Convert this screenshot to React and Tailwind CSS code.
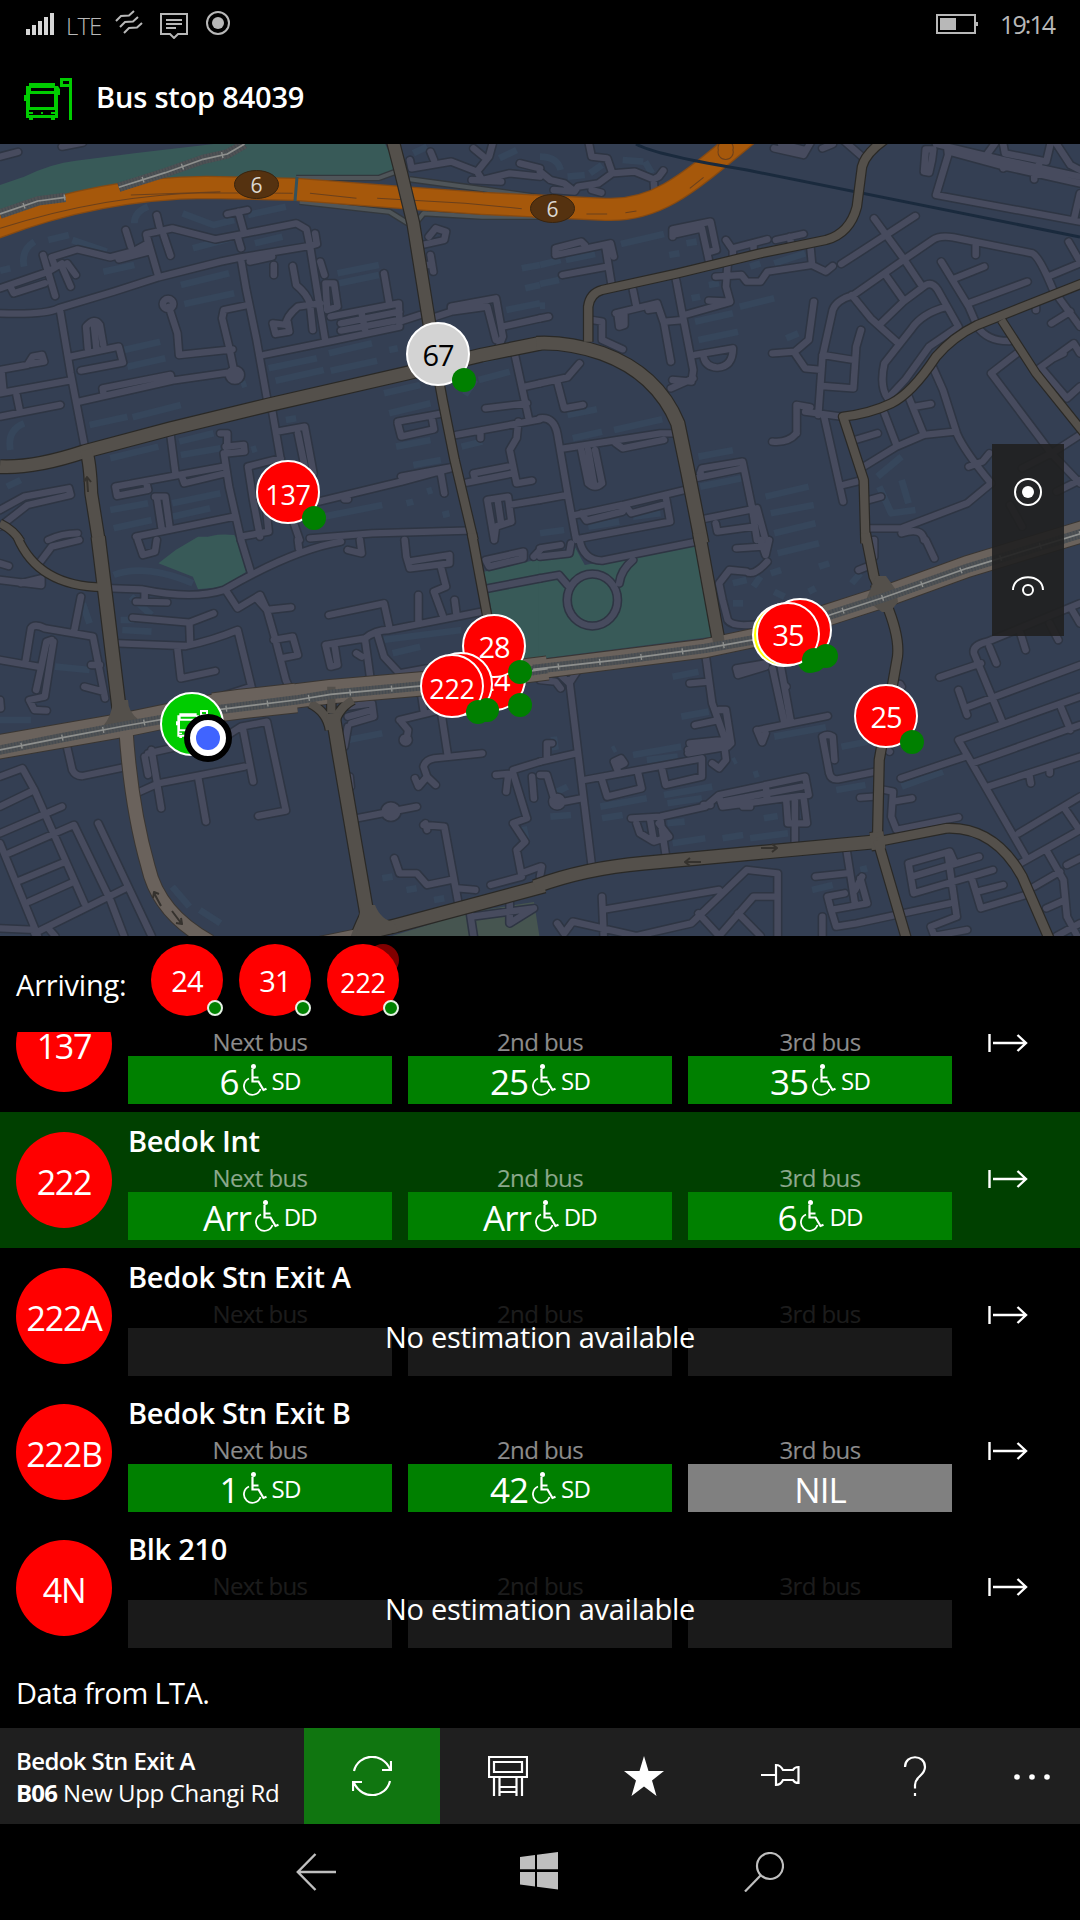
import clsx from "clsx";

// The map is cut in four tiles, every tile is 1568 x 1200 units
const tiles = [
  {
    id: "nw",
    transform: "translate(0 140) scale(0.3444 0.3333)",
    parks:
      "M0 135L70 110Q150 70 220 62L390 40L620 12L1118 12L1160 100L1110 115L640 130Q300 140 0 260ZM580 1200Q620 1178 680 1185L690 1200Z",
    buildings:
      "M70 380Q60 330 100 305M140 300L200 285M210 300L310 335M0 392L30 385M390 250Q390 215 430 200M530 220L620 255L680 240M720 225L830 200M560 325L670 295M740 310L820 290M300 395L390 375M525 435L665 400M535 492L680 460M360 630L465 605M370 680L480 655M780 685L920 655M955 640L1080 610M800 722L940 690M960 692L1095 662M260 855L370 830M385 832L525 795M30 930Q20 870 70 850M980 400L1100 375M985 430L1100 405M1115 760L1220 735M1130 820L1250 790M1150 920L1250 900M320 955L460 920M330 1040L380 1025M520 905L620 880M525 945L640 925M320 1110L430 1090M330 1165L440 1140M500 1090L640 1060M500 1130L610 1105M940 1130L1110 1095M1200 975L1280 960M1350 765L1380 720M1390 720L1480 695M1400 660L1440 650M1340 920L1400 905M1515 385L1568 375M1525 445L1568 435M1470 510L1568 490M1200 40L1240 20M1450 55L1500 30M20 1040L60 1020M830 840L860 835M1180 1090L1200 1085M1285 1125L1305 1120M1240 1055L1255 1050M1130 630L1155 625M730 930L745 925M700 735L715 730",
    minor:
      "M0 520Q130 525 170 505L330 455L460 412L640 365L700 352L900 318M900 318L890 268L860 250L705 282L625 298L500 265L425 282L430 310L345 358L430 335M0 445L140 395L180 370M30 440L40 460L130 430M125 345L160 468M195 370L220 405M180 380L205 440M150 352L225 328L320 352L420 325M150 352L158 375M365 270L380 320M425 285L460 410M455 225L463 260M475 285L495 347M660 222L718 210M692 215L708 275M690 290L700 325M900 318L920 312L915 280M725 365L790 350M795 375L795 405M900 318L925 480L945 605M930 365L942 405M850 378L860 435Q890 460 900 490L908 570M930 490L865 500Q830 530 830 555L792 550L800 582L840 575L835 545M765 645L955 605L1160 560L1158 490L960 530M945 430L970 430L980 500L950 510ZM1115 400L1130 490M990 550L1160 515M990 572L1160 540M1050 520L1060 570M1160 545L1220 525M700 360L715 450L745 600L775 775M790 810L815 960M720 495L650 510L645 535L665 620L682 705M675 628L520 645L515 580L490 500M682 695L500 722L230 785M300 758L298 745L495 705L498 720M175 515L205 700L245 915M205 650L345 620L357 668L235 692M255 625L250 560Q275 530 290 555L300 615M272 550L280 625M0 690L80 675L95 650L122 645L128 665L90 672M0 760L200 722M5 700L10 755M48 765L58 815M0 830L175 795M495 885L510 1005M335 1040L650 980M335 1040L340 1068L430 1050L425 1030M530 1015L535 1030L655 1000M640 880L660 880L660 940L710 935L708 915L655 920M650 940L665 1040L700 1200M805 875L885 860L910 1000M865 880L885 980M815 955L720 980L735 1080L755 1190M770 1080L780 1175L700 1190M925 1085L1165 1025L1320 982M1165 1010L1320 980M1280 1000L1290 1060M850 1140L870 1200M0 1110L70 1070L200 1045L205 1065L80 1095L0 1160M140 1200Q180 1180 225 1180M395 1190L680 1130M450 1070L480 1070L492 1160M455 1070L470 1170M1155 845L1285 820M1155 850L1165 890L1260 868L1255 840M1325 885L1568 838M1410 805L1530 790M1495 645L1535 835M1525 740L1568 730M1265 530L1310 515L1310 500L1440 475L1460 590L1450 615M1310 515L1415 500L1440 600M1460 560L1568 535M1505 845L1500 895L1480 930L1500 1030L1545 1022M1380 1020L1375 1000L1475 980M1355 1028L1490 1000M1395 880L1395 895M1415 1080L1475 1070L1485 1145L1440 1160L1435 1200M1415 1080L1435 1200M1445 1080L1455 1150M1480 1095L1568 1080M1190 60L1195 85L1310 65L1385 95L1420 50L1430 12M1385 95L1400 120L1480 100L1568 110M1250 35L1260 60M1370 120L1455 125M1510 70L1568 85M1375 25L1410 55M1225 315L1290 300L1295 275L1265 265L1245 290M1250 345L1258 395M1235 375L1255 375M900 1195L1080 1180L1355 1172M0 50L52 36M180 20L240 8M665 705A17 17 0 1 0 699 705A17 17 0 1 0 665 705M473 492A15 15 0 1 0 503 492A15 15 0 1 0 473 492M1000 1078L1010 1078",
    major: [
      [38, "M0 980Q100 985 245 935L500 865L780 795L1180 700L1400 645L1568 610"],
      [34, "M1140 0L1165 100L1200 250L1245 540L1260 640"],
      [24, "M1260 640L1285 780L1320 960L1375 1200"],
      [34, "M250 930Q262 970 265 1060L288 1210"],
      [22, "M0 1150Q40 1170 60 1205"],
    ],
    brown: [],
    highway: "M-20 266Q280 145 600 142L860 148L1200 175L1400 190L1590 200",
    ramps: "M860 114L1100 114L1150 95M1190 118L1350 140L1568 172M870 185L1130 215L1185 250M1210 245L1230 220L1400 230L1568 230",
    rail: "M0 222L110 183L190 172M345 142L480 98L590 58L660 42L710 12",
    lines: "M0 265Q300 165 600 158L850 160M900 160L1035 175M1095 175L1350 190L1515 206M380 165L640 155",
  },
  {
    id: "ne",
    transform: "translate(540 140) scale(0.3444 0.3333)",
    parks: "",
    buildings:
      "M0 50Q50 50 60 90M80 110L130 105M145 100L180 75M240 60L300 65M305 65L325 100M235 312L360 282M0 375L60 360M75 360L160 342M375 345L405 340M425 310L455 305M680 370L770 340M0 432L55 420M440 475L465 470M490 435L520 430M580 500L680 475M450 545L560 520M460 600L575 575M0 497L15 497M95 895L180 875M215 870L355 838M80 825L165 808M460 950L560 931M465 1040L585 1015M655 1070L780 1040M670 1120L795 1095M680 1180L800 1150M270 1130L350 1120M140 1160L230 1145M715 595L750 580M980 1010L1050 950M985 1040L1020 1120L1090 1110M1050 1020L1070 1090M610 380L640 370M0 1180L70 1170",
    minor:
      "M140 0L150 50L195 55L210 100L275 95L330 118L345 110L358 92M330 118L332 148M210 100L170 130L110 140L100 155L40 150M0 95L30 120L70 130L95 150M150 150L178 158M680 25L765 45L790 0M820 25L850 12M880 0L935 50M700 12L770 30M1120 28L1142 28L1138 60L1130 98L1115 95ZM1180 0L1185 45L1150 165L1568 245M1150 12L1345 60L1568 110M1190 35L1350 80L1568 130M1320 12L1300 40M1345 12L1350 40L1470 65L1485 0M1500 12L1540 75L1568 90M1340 60L1345 85M1435 100L1435 118M1568 160L1550 240M1450 65L1445 95M385 290L385 268L495 245L512 330L495 335M385 285L470 265L490 360M45 340L45 325L120 305L130 315M45 345L205 310L214 350M190 320L208 435M65 405L195 380M540 300L560 330L560 345M560 325L660 298M685 300L765 282M725 290L728 305M620 310L620 325M785 320L790 375L830 395L850 378M790 375L660 395L640 425L600 425L585 405L510 410M545 370L540 440L552 485L490 482M550 487L420 525M395 420L415 530L445 690L440 725L385 720M445 715L380 745M270 450L280 500M220 520L340 490L360 550L380 665M225 520L230 560L245 555L245 515M315 510L345 505M365 545L415 540M150 540L180 545L180 600L240 628M450 645L560 625Q560 680 515 683Q480 680 475 650M0 535L25 530M0 730L80 712L115 670M50 725L70 805L125 795M0 835Q40 830 50 880L80 1060L105 1200M70 925L350 880L385 880M220 910L240 925L360 900M120 930L140 1030Q160 1050 180 1030L160 930M140 930L158 1040M0 1080L80 1065M105 1125L240 1095L420 1050M120 1120L135 1142L240 1115L245 1100M250 1100L265 1120L355 1095M365 1070L378 1145L105 1198M450 1015L590 985M465 1000L470 985L588 965L615 1100L630 1200M470 1138L630 1105L655 1200M510 1150L515 1175L620 1160M795 485L780 600L740 635L675 640M740 640L770 685L815 690M745 880Q720 910 675 905M745 880L745 795L785 802M770 815L875 830M808 825L820 650L850 510Q860 480 910 465L1055 360L1140 300Q1160 285 1200 292L1430 340Q1450 350 1490 450L1568 560M820 645L910 660M820 738L910 745L918 620L932 570M905 465L960 535L1035 605M970 235L1055 355L1110 440M875 372L1090 228M1000 400L1055 480M985 555L1055 485L1120 435Q1140 425 1155 450L1215 560L1130 620L1060 720L1010 775M1180 500Q1110 520 1080 565L1000 670Q985 740 1010 775M1165 365L1245 500L1270 560Q1300 605 1365 603M1205 415L1290 380M1245 490L1415 425M1265 315L1265 345M1475 410L1568 370M1535 305L1568 365M1485 550L1540 515M1440 500L1440 510M1385 640L1310 700L1485 940L1568 1030M1485 940L1568 885M1400 985L1485 940M1140 680L1170 750L1210 880Q1230 930 1310 1030L1240 1090L1050 1165L955 1165M1035 920L1115 885L1205 875M1070 770L1115 885M1035 920L940 980M1000 820L1035 915M915 900L980 880M1090 800L1135 792M1245 980L1285 965L1305 940M825 830L880 1085M880 1035L930 1022M955 1080L990 1070M1450 685L1550 610L1568 640M1460 690L1530 775L1568 740M1490 655L1520 640M1500 1055L1568 1020M1050 1180Q1110 1160 1115 1200M1365 1095L1400 1160",
    major: [
      [38, "M-10 610Q80 605 180 640Q340 700 400 850L430 1000L470 1210"],
      [24, "M140 605L140 500Q145 460 180 450L400 400L640 340L830 300Q900 280 920 200L935 80Q945 40 1000 0"],
      [24, "M1580 428L1270 555Q1200 590 1150 650Q1080 760 1020 790Q960 820 880 830L940 1020L945 1210"],
      [22, "M1340 540L1440 700L1580 880"],
    ],
    brown: [],
    highway: "M-20 198L190 208C340 215 430 130 600 -15",
    ramps: "",
    rail: "",
    lines: "M135 222L195 222M248 218L280 213M435 145L475 112M518 30A22 22 0 1 0 560 30A22 22 0 1 0 518 30",
  },
  {
    id: "sw",
    transform: "translate(0 540) scale(0.3444 0.3333)",
    parks: "M460 70L510 30L575 -10L685 -10L715 95L650 140L575 148L560 110ZM1405 95L1575 55L1575 360L1450 370L1418 150Z",
    buildings:
      "M330 105Q420 70 560 130M350 240L390 240M355 270L440 275M160 380L260 390M380 170L440 225M0 540L90 540M1110 300L1340 270M1140 340L1220 320M1010 600L1110 580M500 1040L550 1100M580 1110L640 1150M1110 1015L1140 1010M1180 1050L1210 1045M1260 1080L1290 1075M1430 100L1530 75M240 190L260 250M1520 860L1530 910",
    minor:
      "M0 120L120 135L120 115L60 130M0 70L25 78M110 75L150 20L230 0M400 0L415 45L450 35L455 0M325 145L410 148Q560 180 650 150Q850 30 990 5M420 160L420 185M395 185L485 187M865 0L868 25M700 0L728 95M385 233L550 248L620 220M550 250L552 310M345 310L540 318Q620 300 690 270L730 440L640 470M515 325L525 415L625 393M655 150L690 205L755 165L775 210L845 202M745 175L775 210L800 300L830 420L860 490M795 300L850 290L865 345L815 355M235 170L215 275M75 360L90 265Q100 250 130 265L270 290L305 475M0 360L110 380M150 300L135 305L120 380L105 450M155 305L145 370L130 470L85 480L100 510L135 512M265 375L290 375M245 440L300 455M955 225L1115 190L1130 260M945 315L1060 295Q1090 270 1130 270L1400 215M1215 165L1215 245M1320 180L1325 220M945 315L960 380L980 375L972 320M1060 300L1080 450M1035 340L1050 350M1095 280L1115 350L1160 400L1240 385M1175 0L1180 50L1190 85L1305 70L1305 45L1185 65M1280 80L1295 140L1260 155L1285 225M1045 0L1050 40L1010 30M1410 60L1520 35L1520 55L1420 80ZM1418 145L1568 115M1568 30L1550 50M190 600L210 690Q220 710 240 708L370 680M400 758L460 730L710 680M430 640L540 615M440 630L468 805M420 650L430 705M575 710L598 845M705 565L735 725M640 600L700 560L775 545L830 812L750 828M0 710L65 685L100 750L245 1090M0 800L90 755M0 880L180 800M15 945L215 855L320 1080L360 1188M0 910L110 1188M50 1025L190 965M85 1085L215 1025M100 1180L365 1045M285 850L440 1188M140 1165L160 1188M0 1165L100 1170M1010 500L1080 490L1085 530L1020 550M1010 530L1080 510M1010 560L1000 620M1160 540L1280 510L1300 645M1165 545L1185 570L1180 605M1240 710L1230 680Q1235 660 1260 655L1400 640M1205 715L1215 740L1240 710L1265 735M1220 440L1230 510M1035 835L1210 800M1015 710L1018 740M1230 855L1290 860L1330 1085M1240 870L1235 850M1145 955L1160 1000L1210 1000L1240 1035L1310 1020M1330 1045L1380 1050M1440 705L1490 700L1530 835L1490 850L1525 905L1500 930L1515 1010L1425 1035M1490 690L1568 665M1545 710L1550 775M1475 710L1470 755M1515 1000L1568 980M1365 1120L1375 1188M1370 1130L1550 1105L1480 1150L1480 1085M1117 815A18 18 0 1 0 1153 815A18 18 0 1 0 1117 815M1170 600A8 8 0 1 0 1186 600A8 8 0 1 0 1170 600M0 480L2 505M890 440L935 440",
    major: [
      [22, "M50 -10Q110 140 300 142"],
      [38, "M285 -10L310 200L345 500L355 550"],
      [24, "M900 490Q950 515 958 570M1025 480Q972 510 970 570M962 440L962 520M1025 1205Q1045 1150 1065 1110"],
      [38, "M966 520L985 640L1070 1150M1060 1180L1150 1157L1580 1038"],
      [24, "M1370 -20L1415 230"],
    ],
    brown: [
      [70, "M-10 622L360 555L640 495L960 455L1240 430L1590 384"],
      [86, "M620 503L700 492L860 474"],
      [38, "M365 560Q380 800 430 980Q460 1120 610 1205"],
      [20, "M860 1215L1050 1175"],
    ],
    highway: "",
    ramps: "",
    rail: "M-10 632L185 592L360 558L640 508L860 480L960 463L1240 436L1590 386",
    lines: "",
  },
  {
    id: "se",
    transform: "translate(540 540) scale(0.3444 0.3333)",
    parks: "M-5 62L80 50L95 10L130 75L450 15L500 290L-5 357Z",
    buildings:
      "M690 40L810 10M0 75L80 62M385 410L460 395M410 530L490 515M270 645L410 620M310 660L400 650M360 765L500 740M370 790L470 775M175 800L310 775M180 835L240 825M385 910L480 895M530 895L590 885M610 895L720 880M680 590L830 562M860 750L945 735M875 620L950 605M1050 740L1170 695M790 1050L850 1035M560 130L600 120M620 140L640 110M680 155L710 170M670 100L700 90M810 80L840 70M780 155L800 145M560 190L590 190M905 130L930 100M210 630L220 625M40 590L45 630M40 760L80 740M30 830L90 825M620 705L635 700M560 665L570 660M930 990L950 985M370 850L420 845M650 835L690 828",
    minor:
      "M0 50L85 40L90 10M0 25L60 15M115 0Q125 60 180 62L455 5M270 60Q235 90 230 130M0 115L55 105L80 135M79 180A73 78 0 1 0 225 180A73 78 0 1 0 79 180M570 25L645 20M640 0L655 45L665 0M660 65Q620 110 600 95L550 90L520 130L530 180L545 240Q560 265 650 250M925 90L950 80M970 0L970 50M1120 0L1145 55M85 420L120 720L150 975M50 395L85 430L110 390M0 420L45 425L60 445M480 340L500 490L545 620M435 430L490 425M520 510L540 510L555 610L545 620L430 640M450 555L510 542M435 610L535 600M430 630L535 615L540 660L520 685L500 670M570 385L655 370L655 380L575 405ZM675 385L710 550M700 385L728 545M635 570L835 528M630 570L645 607L655 580M0 665L105 640M35 610L20 610L20 660M0 705L20 705L45 790L120 775M36 785A14 14 0 1 0 64 785A14 14 0 1 0 36 785M130 720L470 655L470 710L365 735L355 690M180 720L195 770L295 745L285 700M225 690L215 665L235 655L245 670L225 680M265 835L350 830L480 800L520 765L770 710L780 765L530 800L520 770M530 785L760 740M655 735L660 775M475 795L495 795M350 840L365 945M320 840L330 900M280 850L290 880L330 905L375 890L345 850M590 800L610 800M715 780L720 850L775 850L765 770M740 780L740 905M855 660L850 590Q835 580 820 590L840 700Q845 720 865 718L975 695M1000 750L1025 755L1020 830L1035 870L1215 832M1025 785L1080 775M930 773L970 770M1045 432L1050 440M1048 715L1235 650M1160 412L1280 370M1340 540L1260 340Q1255 315 1300 305L1568 190M1245 500L1568 375M1215 450L1240 525M1215 600L1568 470M1215 600L1410 950M1255 670L1568 555M1510 495L1540 570M1300 740L1568 650M1390 880L1568 770M1520 800L1560 860M1395 970L1568 870M1305 320L1325 370M1395 280L1410 330M1480 250L1505 300M1545 210L1568 250M1420 700L1425 730M1480 690L1480 700M1470 930L1520 1020L1530 1130L1560 1188M1435 1040L1510 995M1470 1105L1525 1080M1530 975L1568 955M1500 1188L1568 1150M180 1070L185 1188M190 1108L520 1050M50 1150L70 1180L95 1145L280 1188L440 1150L600 990L690 1000L690 1188M460 1120L520 1188L620 1070L690 1070M575 1120L640 1188M890 930L915 1095M800 1010L890 1000M930 1015L950 1090L845 1110L835 1070L885 1060M845 1110L860 1160L920 1150L1190 1090M820 1130L820 1188M915 1050L935 1010M1205 970L1190 935L1070 970L1085 1060L1315 990M1080 1010L1275 950M1185 950L1210 1130L1135 1160L1145 1188L1240 1170M1255 1020L1280 1105L1410 1065M1270 1055L1345 1035M5 980L0 1010M1010 630L1015 635M710 435L715 440",
    major: [
      [34, "M462 -20L520 310"],
      [48, "M985 130L1005 200"],
      [26, "M945 -20L970 110L1005 190Q1045 290 1038 350L985 660L980 890"],
      [38, "M-15 1040Q130 985 300 970L980 905"],
      [52, "M960 905L1000 900"],
      [26, "M980 905L1180 865Q1320 860 1400 1010L1480 1200M980 900L1065 1200"],
    ],
    brown: [
      [54, "M-20 390L480 325L660 285"],
      [62, "M640 290L850 220L1000 170L1240 80L1590 -30"],
    ],
    highway: "",
    ramps: "",
    rail: "M-20 388L240 358L480 325L660 292L850 222L1000 172L1240 85L1590 -25",
    lines: "",
  },
];

function TileLayer({ children }) {
  return tiles.map((tile) => (
    <g key={tile.id} transform={tile.transform}>
      {children(tile)}
    </g>
  ));
}

function StreetMap() {
  return (
    <svg viewBox="0 144 1080 792" className="block h-full w-full" fill="none" strokeLinejoin="round">
      <rect y="144" width="1080" height="792" fill="#343f53" />
      <TileLayer>{(t) => <path d={t.buildings} stroke="#36465b" strokeWidth="20" />}</TileLayer>
      <TileLayer>{(t) => <path d={t.parks} fill="#385a58" />}</TileLayer>
      <path d="M379 940L470 912L534 902L540 940Z" fill="#465550" />
      <TileLayer>{(t) => <path d={t.minor} stroke="#2e3543" strokeWidth="28" strokeLinecap="round" />}</TileLayer>
      <TileLayer>{(t) => <path d={t.minor} stroke="#474b5e" strokeWidth="19" strokeLinecap="round" />}</TileLayer>
      <TileLayer>{(t) => <path d={t.ramps} stroke="#33383d" strokeWidth="20" />}</TileLayer>
      <TileLayer>{(t) => <path d={t.ramps} stroke="#4f5559" strokeWidth="12" />}</TileLayer>
      <TileLayer>{(t) => <path d={t.highway} stroke="#864a12" strokeWidth="70" />}</TileLayer>
      <TileLayer>{(t) => <path d={t.highway} stroke="#a6580b" strokeWidth="62" />}</TileLayer>
      <TileLayer>{(t) => <path d={t.lines} stroke="#6b401c" strokeWidth="3" />}</TileLayer>
      <path d="M636 144Q655 155 747 170L1080 237" stroke="#1a2a3d" strokeWidth="3" />
      <path d="M297 177L295 201" stroke="#34515c" strokeWidth="3" />
      <TileLayer>
        {(t) => t.brown.map(([w, d]) => <path key={d} d={d} stroke="#3a3632" strokeWidth={w + 6} />)}
      </TileLayer>
      <TileLayer>{(t) => t.major.map(([w, d]) => <path key={d} d={d} stroke="#2a2926" strokeWidth={w + 7} />)}</TileLayer>
      <TileLayer>{(t) => t.brown.map(([w, d]) => <path key={d} d={d} stroke="#6a625c" strokeWidth={w} />)}</TileLayer>
      <TileLayer>{(t) => t.major.map(([w, d]) => <path key={d} d={d} stroke="#54504b" strokeWidth={w} />)}</TileLayer>
      {/* junctions */}
      <path
        d="M103 726Q112 716 113 700L128 700Q128 712 139 720L128 728ZM361 905L375 905Q381 920 394 922L398 932L370 937L356 937ZM866 600L876 576L886 576L896 590L898 602L890 612L882 612Z"
        fill="#54504b"
      />
      <TileLayer>{(t) => <path d={t.rail} stroke="#4f5254" strokeWidth="28" />}</TileLayer>
      <TileLayer>{(t) => <path d={t.rail} stroke="#34404c" strokeWidth="28" strokeDasharray="3 6" opacity="0.35" />}</TileLayer>
      <TileLayer>{(t) => <path d={t.rail} stroke="#8e908e" strokeWidth="5" />}</TileLayer>
      <TileLayer>{(t) => <path d={t.rail} stroke="#8e908e" strokeWidth="18" strokeDasharray="4 117" strokeDashoffset="-72" />}</TileLayer>
      {/* one way arrows */}
      <g stroke="#35322e" strokeWidth="2">
        <path d="M88 492L87 478M84 482L87 477L91 482M761 848L777 848M772 844L777 848L772 852M701 862L685 862M690 858L685 862L690 866" />
        <path d="M161 906L154 893M153 898L154 892L159 894M172 911L181 923M176 923L182 924L181 918" />
      </g>
      {[
        [256.5, 184.5],
        [552.5, 208.5],
      ].map(([x, y]) => (
        <g key={x}>
          <ellipse cx={x} cy={y} rx="22" ry="14" fill="#553210" stroke="#38240f" />
          <text x={x} y={y + 8.5} fontSize="21" textAnchor="middle" fill="#dcd8d2" className="font-['Open_Sans',sans-serif]">
            6
          </text>
        </g>
      ))}
    </svg>
  );
}

const markers = [
  { label: "67", x: 438, y: 354, color: "bg-[#d3d3d3] text-black" },
  { label: "137", x: 288, y: 492, color: "bg-[#f00]" },
  { label: "24", x: 494, y: 679, color: "bg-[#f00]" },
  { label: "28", x: 494, y: 646, color: "bg-[#f00]" },
  { label: "", x: 461, y: 684, color: "bg-[#f00]" },
  { label: "222", x: 452, y: 686, color: "bg-[#f00]" },
  { label: "", x: 800, y: 630, color: "bg-[#f00]" },
  { label: "", x: 784, y: 635, color: "bg-[#ff0]" },
  { label: "35", x: 788, y: 634, color: "bg-[#f00]" },
  { label: "25", x: 886, y: 716, color: "bg-[#f00]" },
];

function Marker({ label, x, y, color }) {
  return (
    <div className="absolute size-16 -translate-x-1/2 -translate-y-1/2" style={{ left: x, top: y - 144 }}>
      <div
        className={clsx(
          "flex size-16 items-center justify-center rounded-full border-2 border-white leading-none",
          label.length > 2 ? "pt-[5px] text-[27px] tracking-[-0.3px]" : "pt-[1px] text-[29px] tracking-[-1px]",
          color
        )}
      >
        {label}
      </div>
      <div className="absolute top-[46px] left-[46px] size-6 rounded-full bg-[#008000]" />
    </div>
  );
}

function BusStopIcon({ className }) {
  return (
    <svg viewBox="72 234 144 126" className={className} fill="currentColor">
      <path fillRule="evenodd" d="M180 234H216V360H207V261H180ZM189 243V252H207V243Z" />
      <path
        fillRule="evenodd"
        d="M87 249H165V258H174L180 268V285H174V354H165V360H153V354H99V360H87V354H78V303H72V285H78V258H87ZM93 264V273H162V264ZM90 282V321H162V282ZM87 330V336H99V342H87V345H165V342H153V336H165V330ZM123 336H129V342H123Z"
      />
    </svg>
  );
}

function StatusBar() {
  return (
    <div className="flex h-12 items-start justify-between pr-[25px] pl-[26px] text-[#b8b8b8]">
      <div className="flex">
        <svg className="mt-[13px] h-[22px] w-7" viewBox="0 0 28 22" fill="#d6d6d6">
          <path d="M0 16h4v6H0zM6 12h4v10H6zM12 8h4v14h-4zM18 4h4v18h-4zM24 0h4v22h-4z" />
        </svg>
        <span className="mt-[10px] ml-[12px] w-9 text-[24px] leading-[32px] font-light tracking-[-0.9px]">LTE</span>
        <svg className="mt-[10px] ml-[13px] h-6 w-7" viewBox="0 0 28 24" fill="none" stroke="currentColor" strokeWidth="2">
          <path d="M1 11L6 6L14 5.500L19 1M5 17L10 12L18 11.500L23 7M9 23L14 18L22 17.500L27 13" />
        </svg>
        <svg className="mt-[13px] ml-[17px] h-[26px] w-7" viewBox="0 0 28 26" fill="none" stroke="currentColor" strokeWidth="2">
          <path d="M1 1H27V21H18L14 25L10 21H1ZM6 7H22M6 11H22M6 15H16" />
        </svg>
        <svg className="mt-[11px] ml-[18px] size-6" viewBox="0 0 24 24">
          <circle cx="12" cy="12" r="11" fill="none" stroke="currentColor" strokeWidth="2" />
          <circle cx="12" cy="12" r="6" fill="currentColor" />
        </svg>
      </div>
      <div className="flex">
        <svg className="mt-[14px] h-5 w-[42px]" viewBox="0 0 42 20" fill="currentColor">
          <path fillRule="evenodd" d="M0 0H40V8H42V12H40V20H0ZM2 2V18H38V2Z" />
          <path d="M4 4h16v12H4z" />
        </svg>
        <span className="mt-[8px] ml-[22px] w-[55px] text-[25px] leading-[32px] tracking-[-1.9px]">19:14</span>
      </div>
    </div>
  );
}

function Header() {
  return (
    <header className="flex h-24 items-start pl-6">
      <BusStopIcon className="mt-[30px] h-[42px] w-12 text-[#00cc00]" />
      <h1 className="mt-[29px] ml-6 text-[29px] leading-[40px] font-semibold tracking-[-0.2px]">Bus stop 84039</h1>
    </header>
  );
}

function MapPanel() {
  return (
    <div className="relative h-[792px] overflow-hidden">
      <StreetMap />
      {markers.map((marker, i) => (
        <Marker key={i} {...marker} />
      ))}
      <div className="absolute top-[548px] left-[160px] flex size-16 items-center justify-center rounded-full border-2 border-white bg-[#00cc00]">
        <BusStopIcon className="h-7 w-8 text-white" />
      </div>
      <div className="absolute top-[570px] left-[184px] size-12 rounded-full border-6 border-black bg-white p-[6px]">
        <div className="size-6 rounded-full bg-[#4064ff]" />
      </div>
      <div className="absolute top-[300px] left-[992px] flex h-48 w-[72px] flex-col bg-[#202020]/90">
        <button className="flex h-24 items-center justify-center">
          <svg className="size-7" viewBox="0 0 28 28">
            <circle cx="14" cy="14" r="13" fill="none" stroke="#fff" strokeWidth="2" />
            <circle cx="14" cy="14" r="6" fill="#fff" />
          </svg>
        </button>
        <button className="flex h-24 items-center justify-center">
          <svg className="mt-[-4px] h-5 w-8" viewBox="0 0 32 20" fill="none" stroke="#fff" strokeWidth="2">
            <path d="M1 14C1 -3 31 -3 31 14" />
            <circle cx="16" cy="14" r="5" />
          </svg>
        </button>
      </div>
    </div>
  );
}

function Arriving() {
  return (
    <section className="flex h-24 items-center gap-4 pl-4">
      <span className="mt-[2px] w-[119px] text-[29px] tracking-[-0.2px]">Arriving:</span>
      {["24", "31", "222"].map((bus) => (
        <div key={bus} className="relative mt-[-8px] size-[72px]">
          {bus === "222" && <div className="absolute top-0 right-0 size-8 rounded-full bg-[#800000]" />}
          <div
            className={clsx(
              "relative flex size-[72px] items-center justify-center rounded-full bg-[#f00] leading-none",
              bus.length > 2 ? "pt-[4px] text-[27px] tracking-[-0.2px]" : "text-[29px] tracking-[-0.8px]"
            )}
          >
            {bus}
          </div>
          <div className="absolute right-0 bottom-0 size-4 rounded-full border-2 border-[#e5f2e5] bg-[#008000]" />
        </div>
      ))}
    </section>
  );
}

const services = [
  { bus: "137", dest: "", times: [["6", "SD"], ["25", "SD"], ["35", "SD"]] },
  { bus: "222", dest: "Bedok Int", times: [["Arr", "DD"], ["Arr", "DD"], ["6", "DD"]], active: true },
  { bus: "222A", dest: "Bedok Stn Exit A", times: null },
  { bus: "222B", dest: "Bedok Stn Exit B", times: [["1", "SD"], ["42", "SD"], ["NIL"]] },
  { bus: "4N", dest: "Blk 210", times: null },
];

function Wheelchair() {
  return (
    <svg className="mr-[5px] ml-1 h-8 w-6" viewBox="0 0 24 32" fill="none" stroke="#fff" strokeWidth="1.800">
      <circle cx="10.500" cy="2.500" r="2.500" fill="#fff" stroke="none" />
      <path d="M9.500 5V17.500H15.500L20.500 26L23.500 24.800M9.500 13.500H15.500" strokeWidth="2.200" />
      <path d="M6 14.500A8.500 8.500 0 1 0 17.500 25" />
    </svg>
  );
}

function Estimate({ label, time }) {
  return (
    <div className="w-[264px]">
      <div className="h-7 text-center text-[24px] leading-[28px] tracking-[-0.6px] text-white/55">{label}</div>
      <div
        className={clsx(
          "flex h-12 items-center justify-center text-[35px] leading-none tracking-[-1px]",
          time?.[1] ? "bg-[#008000]" : "bg-[#808080]"
        )}
      >
        {time && <span className="pt-[2px]">{time[0]}</span>}
        {time?.[1] && (
          <>
            <Wheelchair />
            <span className="pt-[2px] text-[24px] tracking-[-0.8px]">{time[1]}</span>
          </>
        )}
      </div>
    </div>
  );
}

function ServiceRow({ bus, dest, times, active }) {
  return (
    <li className={clsx("flex h-[136px] shrink-0 items-start pl-4", active && "bg-[#004000]")}>
      <div className="mt-5 flex size-24 items-center justify-center rounded-full bg-[#f00] pt-[3px] text-[34px] leading-none tracking-[-1.2px]">
        {bus}
      </div>
      <div className="relative ml-4 w-[824px]">
        <div className="h-[52px] pt-[10px] text-[29px] leading-[38px] font-semibold tracking-[-0.3px]">{dest}</div>
        <div className={clsx("flex gap-4", !times && "opacity-20")}>
          {["Next bus", "2nd bus", "3rd bus"].map((label, i) => (
            <Estimate key={label} label={label} time={times?.[i]} />
          ))}
        </div>
        {!times && (
          <div className="absolute inset-x-0 top-[69px] text-center text-[29px] leading-[40px] tracking-[-0.3px]">
            No estimation available
          </div>
        )}
      </div>
      <svg className="mt-[58px] ml-9 h-[18px] w-10" viewBox="0 0 40 18" fill="none" stroke="#fff" strokeWidth="2.400">
        <path d="M1.500 0V18M5 9H38.500M29.500 1L38 9L29.500 17" />
      </svg>
    </li>
  );
}

function AppBar() {
  return (
    <div className="flex h-24 bg-[#1f1f1f] text-[24px] leading-[32px]">
      <div className="w-[304px] pt-[17px] pl-4 whitespace-nowrap">
        <div className="font-semibold tracking-[-0.6px]">Bedok Stn Exit A</div>
        <div className="tracking-[-0.35px]">
          <b className="tracking-[-0.8px]">B06</b> <span>New Upp Changi Rd</span>
        </div>
      </div>
      <button className="flex w-[136px] items-center justify-center bg-[#107610]">
        <svg className="h-10 w-10" viewBox="0 0 40 40" fill="none" stroke="#fff" strokeWidth="2.200">
          <path d="M2 15C6 -2 30 -5 38 13M39 5V14H30M38 25C34 42 11 45 2 27M1 35V26H10" />
        </svg>
      </button>
      <button className="flex w-[136px] items-center justify-center">
        <svg className="h-10 w-10" viewBox="0 0 40 40" fill="none" stroke="#fff" strokeWidth="2.200">
          <path d="M1 1H39V21H1ZM6 6H34V16H6ZM6 22V40M11.500 22V40M28.500 22V40M34 22V40M11 31H29M11 36H29" />
        </svg>
      </button>
      <button className="flex w-[136px] items-center justify-center">
        <svg className="h-10 w-10" viewBox="0 0 40 40" fill="#fff">
          <path d="M20 0L24.500 15H40L28 24.500L32.500 40L20 30.500L7.500 40L12 24.500L0 15H15.500Z" />
        </svg>
      </button>
      <button className="flex w-[136px] items-center justify-center">
        <svg className="mt-[-3px] h-6 w-10" viewBox="0 0 40 24" fill="none" stroke="#fff" strokeWidth="2.200">
          <path d="M1 12H15M16 2V22C20 22 22 19 23 17H33C34 19 36 20 38.500 20V4C36 4 34 5 33 7H23C22 5 20 2 16 2Z" />
        </svg>
      </button>
      <button className="flex w-[136px] items-center justify-center">
        <svg className="-ml-[2px] h-10 w-6" viewBox="0 0 24 40" fill="none" stroke="#fff" strokeWidth="2.200">
          <path d="M2 11C2 -2 22 -2 22 11C22 20 12 20 12 29V32.500M12 37V40" />
        </svg>
      </button>
      <button className="flex w-24 items-center justify-center">
        <svg className="mt-[2px] h-[6px] w-9" viewBox="0 0 36 6" fill="#fff">
          <circle cx="3" cy="3" r="2.800" />
          <circle cx="18" cy="3" r="2.800" />
          <circle cx="33" cy="3" r="2.800" />
        </svg>
      </button>
    </div>
  );
}

function NavBar() {
  return (
    <nav className="flex h-24 items-start pt-7 pl-[296px] text-[#bfbfbf]">
      <svg className="h-10 w-10" viewBox="0 0 40 40" fill="none" stroke="currentColor" strokeWidth="2.400">
        <path d="M40 20H2M19.500 2L1.800 20L19.500 38" />
      </svg>
      <svg className="ml-[184px] h-10 w-[38px]" viewBox="0 0 38 40" fill="currentColor">
        <path d="M0 5L15 3V17.300H0ZM17 2.700L38 0V17.300H17ZM0 20H15V34.500L0 32.500ZM17 20H38V37.500L17 34.800Z" />
      </svg>
      <svg className="ml-[186px] h-10 w-10" viewBox="0 0 40 40" fill="none" stroke="currentColor" strokeWidth="2.200">
        <circle cx="26" cy="14" r="13" />
        <path d="M17 23L1 39.500" />
      </svg>
    </nav>
  );
}

export default function App() {
  return (
    <div className="flex h-[1920px] w-[1080px] flex-col overflow-hidden bg-black font-['Open_Sans','Noto_Sans',sans-serif] text-white">
      <StatusBar />
      <Header />
      <MapPanel />
      <Arriving />
      <ul className="flex h-[624px] flex-col justify-end overflow-hidden">
        {services.map((service) => (
          <ServiceRow key={service.bus} {...service} />
        ))}
      </ul>
      <footer className="h-[72px] pt-[17px] pl-4 text-[29px] leading-[40px] tracking-[-0.6px]">Data from LTA.</footer>
      <AppBar />
      <NavBar />
    </div>
  );
}
